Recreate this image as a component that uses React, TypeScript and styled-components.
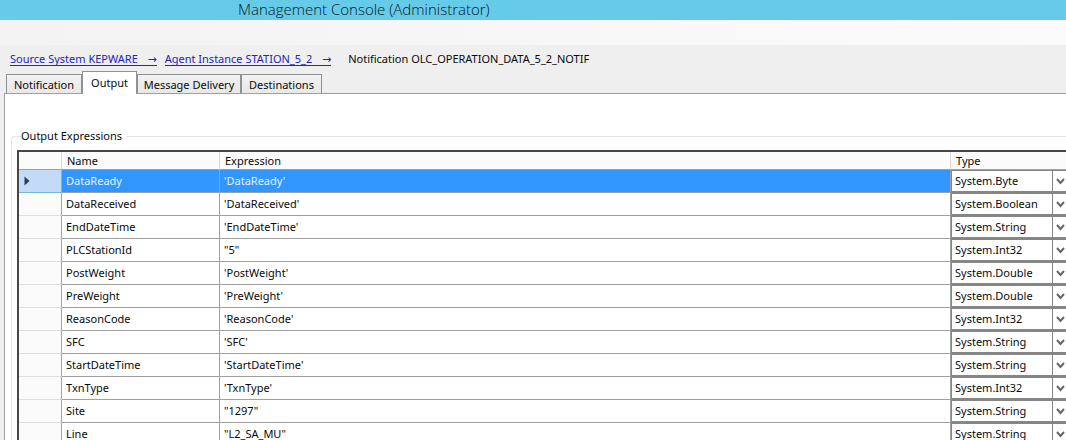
import React, { useState } from "react";
import styled, { createGlobalStyle } from "styled-components";

const GlobalStyle = createGlobalStyle`
  *, *::before, *::after { box-sizing: border-box; }
  body { margin: 0; background: #efefef; }
  body, button, select { font-family: "Noto Sans", "Open Sans", sans-serif; font-size: 11px; line-height: 16px; color: #0a0a0a; }
`;

const Window = styled.div`
  display: flex;
  flex-direction: column;
  height: 100vh;
  overflow: hidden;
`;

const TitleBar = styled.header`
  flex: none;
  height: 20px;
  padding-left: 238px;
  background: #66cae9;
`;

const Title = styled.h1`
  margin: 0;
  font: 300 15px/18px "Open Sans", "Noto Sans", sans-serif;
  color: #08181f;
  white-space: nowrap;
`;

const MenuStrip = styled.div`
  flex: none;
  height: 25px;
  background: linear-gradient(90deg, #f3f3f3, #f7f7f8 50%, #fbfbfb);
`;

const Breadcrumb = styled.nav`
  display: flex;
  flex: none;
  height: 27px;
  padding: 6px 10px 0;
  white-space: nowrap;
`;

const Crumb = styled.a`
  margin-right: 8px;
  border-bottom: 1px solid #2424b8;
  height: 15px;
  color: #2424b8;
  text-decoration: none;
`;

const Arrow = styled.span`
  padding-left: 4px;
  font-family: "DejaVu Sans", sans-serif;
`;

const CurrentCrumb = styled.span`
  margin-left: 9px;
`;

const TabList = styled.div`
  display: flex;
  flex: none;
  align-items: flex-end;
  height: 21px;
  padding-left: 6px;
`;

const Tab = styled.button<{ $active: boolean; $width: number }>`
  flex: none;
  width: ${(p) => p.$width}px;
  height: ${(p) => (p.$active ? 23 : 19)}px;
  margin: 0 0 ${(p) => (p.$active ? -1 : 0)}px;
  padding: ${(p) => (p.$active ? "0 0 1px" : "1px 0 0")};
  border: 1px solid #8f9196;
  border-bottom-width: 0;
  background: ${(p) => (p.$active ? "#fff" : "linear-gradient(#f2f2f2, #e8e8e8)")};
  white-space: nowrap;
  z-index: ${(p) => (p.$active ? 1 : 0)};
  & + & { border-left-width: ${(p) => (p.$active ? 0 : 1)}px; }
`;

const Panel = styled.main`
  flex: 1;
  min-height: 0;
  margin-left: 4px;
  padding: 34px 0 0 6px;
  border: solid #a0a0a4;
  border-width: 1px 0 0 1px;
  background: #fff;
`;

const Group = styled.fieldset`
  min-width: 0;
  margin: 0;
  padding: 6px 0 0 5px;
  border: solid #e2e6e6;
  border-width: 1px 0 0 1px;
  border-top-left-radius: 4px;
`;

const Legend = styled.legend`
  margin-left: 4px;
  padding: 0 4px 0 0;
`;

const Grid = styled.table`
  width: 100%;
  table-layout: fixed;
  border-collapse: separate;
  border-spacing: 0;
  border: solid #464646;
  border-width: 2px 0 0 2px;
`;

const Column = styled.col<{ $width?: number }>`
  width: ${(p) => (p.$width ? `${p.$width}px` : "auto")};
`;

const HeadCell = styled.th`
  height: 18px;
  padding: 1px 0 0 5px;
  border: solid #dadada;
  border-width: 0 1px 0 0;
  border-bottom: 1px solid #a0a0a0;
  background: #fbfbfb;
  font-weight: 400;
  text-align: left;
  line-height: 16px;
  &:last-child { border-right-width: 0; }
`;

const RowHeader = styled.th<{ $selected: boolean }>`
  height: 23px;
  padding: 0 0 0 5px;
  border: solid ${(p) => (p.$selected ? "#74b6dc" : "#dedede")};
  border-width: 0 1px 1px 0;
  border-right-color: ${(p) => (p.$selected ? "#74b6dc" : "#a0a0a0")};
  background: ${(p) => (p.$selected ? "#c3dbf7" : "#fbfbfb")};
  text-align: left;
`;

const Marker = styled.svg`
  display: block;
`;

const Cell = styled.td<{ $selected: boolean }>`
  height: 23px;
  padding: 0 0 0 4px;
  border: solid #a0a0a0;
  border-width: 0 1px 1px 0;
  background: ${(p) => (p.$selected ? "#3296fd" : "#fff")};
  color: ${(p) => (p.$selected ? "#e4f2ff" : "inherit")};
  white-space: nowrap;
`;

const TypeCell = styled.td`
  height: 23px;
  padding: 0;
`;

const Combo = styled.div`
  position: relative;
  height: 23px;
  border: solid #868686;
  border-width: 1px 0 2px 1px;
  background: #fff;
`;

const ComboSelect = styled.select`
  display: block;
  width: 100%;
  height: 20px;
  padding: 0 0 0 3px;
  border: 0;
  border-radius: 0;
  background: transparent;
  appearance: none;
`;

const ComboButton = styled.span`
  position: absolute;
  inset: 0 0 0 auto;
  display: flex;
  align-items: center;
  width: 14px;
  padding-left: 3px;
  border-left: 1px solid #868686;
  pointer-events: none;
`;

const tabs = [
  { label: "Notification", width: 76 },
  { label: "Output", width: 55 },
  { label: "Message Delivery", width: 104 },
  { label: "Destinations", width: 81 },
];

const types = ["System.Byte", "System.Boolean", "System.String", "System.Int32", "System.Double"];

const rows = [
  ["DataReady", "'DataReady'", "System.Byte"],
  ["DataReceived", "'DataReceived'", "System.Boolean"],
  ["EndDateTime", "'EndDateTime'", "System.String"],
  ["PLCStationId", '"5"', "System.Int32"],
  ["PostWeight", "'PostWeight'", "System.Double"],
  ["PreWeight", "'PreWeight'", "System.Double"],
  ["ReasonCode", "'ReasonCode'", "System.Int32"],
  ["SFC", "'SFC'", "System.String"],
  ["StartDateTime", "'StartDateTime'", "System.String"],
  ["TxnType", "'TxnType'", "System.Int32"],
  ["Site", '"1297"', "System.String"],
  ["Line", '"L2_SA_MU"', "System.String"],
];

function TypePicker({ name, value }: { name: string; value: string }) {
  return (
    <Combo>
      <ComboSelect aria-label={`Type of ${name}`} defaultValue={value}>
        {types.map((t) => (
          <option key={t}>{t}</option>
        ))}
      </ComboSelect>
      <ComboButton>
        <svg width="9" height="7" viewBox="0 0 9 7" aria-hidden="true">
          <path d="M1 1 4.5 5 8 1" fill="none" stroke="#666" strokeWidth="2" />
        </svg>
      </ComboButton>
    </Combo>
  );
}

export default function App() {
  const [active, setActive] = useState("Output");
  const [selected, setSelected] = useState(0);

  return (
    <Window>
      <GlobalStyle />
      <TitleBar>
        <Title>Management Console (Administrator)</Title>
      </TitleBar>
      <MenuStrip />
      <Breadcrumb aria-label="Breadcrumb">
        <Crumb href="#source">
          Source System KEPWARE&nbsp; <Arrow>→</Arrow>
        </Crumb>
        <Crumb href="#agent">
          Agent Instance STATION_5_2&nbsp; <Arrow>→</Arrow>
        </Crumb>
        <CurrentCrumb>Notification OLC_OPERATION_DATA_5_2_NOTIF</CurrentCrumb>
      </Breadcrumb>
      <TabList role="tablist">
        {tabs.map((t) => (
          <Tab
            key={t.label}
            type="button"
            role="tab"
            aria-selected={active === t.label}
            $active={active === t.label}
            $width={t.width}
            onClick={() => setActive(t.label)}
          >
            {t.label}
          </Tab>
        ))}
      </TabList>
      <Panel>
        <Group>
          <Legend>Output Expressions</Legend>
          <Grid>
            <colgroup>
              <Column $width={43} />
              <Column $width={158} />
              <Column />
              <Column $width={115} />
            </colgroup>
            <thead>
              <tr>
                <HeadCell aria-label="Row" />
                <HeadCell scope="col">Name</HeadCell>
                <HeadCell scope="col">Expression</HeadCell>
                <HeadCell scope="col">Type</HeadCell>
              </tr>
            </thead>
            <tbody>
              {rows.map(([name, expression, type], i) => (
                <tr key={name} onClick={() => setSelected(i)}>
                  <RowHeader scope="row" aria-label={name} $selected={i === selected}>
                    {i === selected && (
                      <Marker width="6" height="10" viewBox="0 0 6 10" aria-hidden="true">
                        <path d="M0.5 0.5 5.5 5 0.5 9.5Z" fill="#2c3e50" />
                      </Marker>
                    )}
                  </RowHeader>
                  <Cell $selected={i === selected}>{name}</Cell>
                  <Cell $selected={i === selected}>{expression}</Cell>
                  <TypeCell>
                    <TypePicker name={name} value={type} />
                  </TypeCell>
                </tr>
              ))}
            </tbody>
          </Grid>
        </Group>
      </Panel>
    </Window>
  );
}
